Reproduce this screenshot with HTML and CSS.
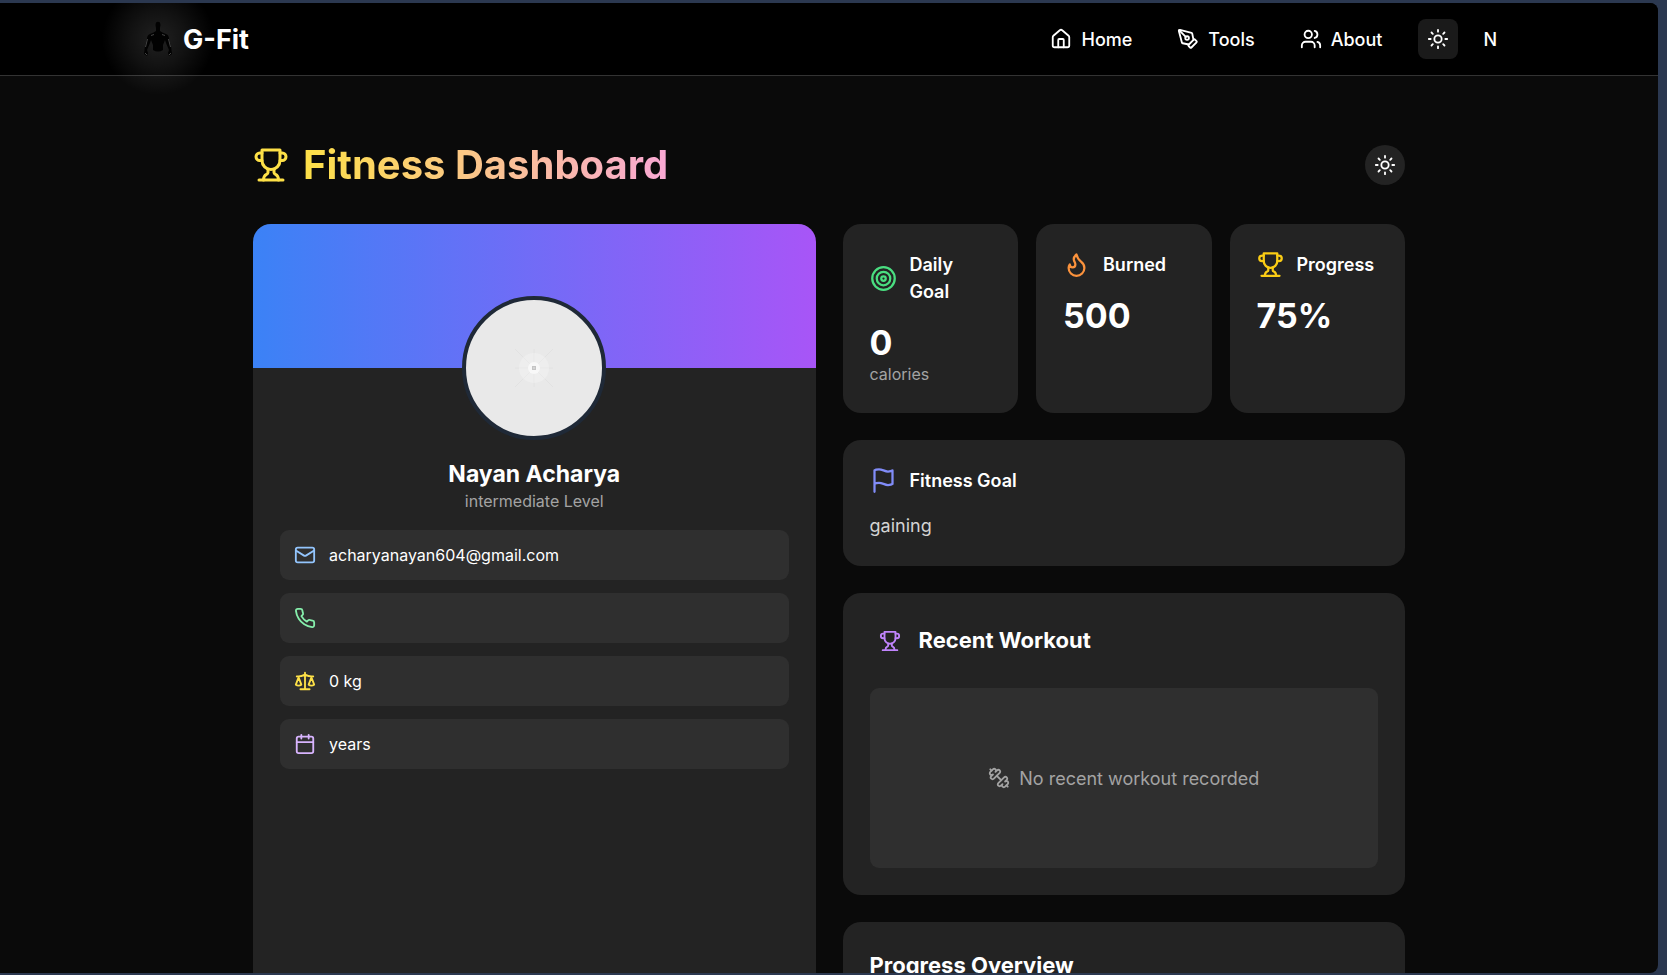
FILE: index.html
```
<!DOCTYPE html>
<html lang="en">

<head>
 <meta charset="UTF-8">
 <meta name="viewport" content="width=device-width, initial-scale=1.0">
 <title>G-Fit</title>
 <link rel="stylesheet" href="styles.css">
</head>

<body>
 <!-- shared icon shapes -->
 <svg class="sprite" aria-hidden="true">
  <symbol id="trophy" viewBox="0 0 24 24">
   <path d="M6 9H4.500a2.500 2.500 0 0 1 0-5H6" />
   <path d="M18 9h1.500a2.500 2.500 0 0 0 0-5H18" />
   <path d="M4 22h16" />
   <path d="M10 14.660V17c0 .55-.47.98-.97 1.210C7.850 18.750 7 20.240 7 22" />
   <path d="M14 14.660V17c0 .55.47.98.97 1.210C16.150 18.750 17 20.240 17 22" />
   <path d="M18 2H6v7a6 6 0 0 0 12 0V2Z" />
  </symbol>
  <symbol id="sun" viewBox="0 0 24 24">
   <circle cx="12" cy="12" r="4" />
   <path d="M12 2v2M12 20v2M4.930 4.930l1.410 1.410M17.660 17.660l1.410 1.410M2 12h2M20 12h2M6.340 17.660l-1.410 1.410M19.070 4.930l-1.410 1.410" />
  </symbol>
 </svg>

 <div class="window">
  <header class="navbar">
   <div class="navbar-inner">
    <a href="#" class="brand">
     <svg class="logo" viewBox="0 0 30 36" aria-hidden="true">
      <defs>
       <radialGradient id="glow">
        <stop offset="0" stop-color="#fff" stop-opacity=".13" />
        <stop offset=".5" stop-color="#fff" stop-opacity=".07" />
        <stop offset="1" stop-color="#fff" stop-opacity="0" />
       </radialGradient>
      </defs>
      <circle cx="15" cy="18" r="56" fill="url(#glow)" />
      <path class="logo-body" d="M13 1.500Q15 0 17 1.500Q18 4 17 7L17 10Q19 11.500 23 13Q26 14 26 18L28 25L29 33L26 35L25 32L26 29L23 22L22 19L20 24L20 29Q15 32 10 29L10 24L8 19L7 22L4 29L5 32L4 35L1 33L2 25L4 18Q4 14 7 13Q11 11.500 13 10L13 7Q12 4 13 1.500Z" />
      <path class="logo-edge" d="M4.500 18L2.500 26M25.500 18L27.500 26M2 32L4 34M28 32L26 34M8 14.500L11 13.500M22 14.500L19 13.500" />
     </svg>
     <span>G-Fit</span>
    </a>
    <nav class="nav-links">
     <a href="#" class="nav-link">
      <svg class="icon" viewBox="0 0 24 24" aria-hidden="true">
       <path d="M15 21v-8a1 1 0 0 0-1-1h-4a1 1 0 0 0-1 1v8" />
       <path d="M3 10a2 2 0 0 1 .709-1.528l7-5.999a2 2 0 0 1 2.582 0l7 5.999A2 2 0 0 1 21 10v9a2 2 0 0 1-2 2H5a2 2 0 0 1-2-2z" />
      </svg>
      Home
     </a>
     <a href="#" class="nav-link">
      <svg class="icon" viewBox="0 0 24 24" aria-hidden="true">
       <path d="M15.707 21.293a1 1 0 0 1-1.414 0l-1.586-1.586a1 1 0 0 1 0-1.414l5.586-5.586a1 1 0 0 1 1.414 0l1.586 1.586a1 1 0 0 1 0 1.414z" />
       <path d="m18 13-1.375-6.874a1 1 0 0 0-.746-.776L3.235 2.028a1 1 0 0 0-1.207 1.207L5.350 15.879a1 1 0 0 0 .776.746L13 18" />
       <path d="m2.300 2.300 7.286 7.286" />
       <circle cx="11" cy="11" r="2" />
      </svg>
      Tools
     </a>
     <a href="#" class="nav-link">
      <svg class="icon" viewBox="0 0 24 24" aria-hidden="true">
       <path d="M16 21v-2a4 4 0 0 0-4-4H6a4 4 0 0 0-4 4v2" />
       <circle cx="9" cy="7" r="4" />
       <path d="M22 21v-2a4 4 0 0 0-3-3.870M16 3.130a4 4 0 0 1 0 7.750" />
      </svg>
      About
     </a>
     <button class="theme-btn" aria-label="Toggle theme"><svg class="icon"><use href="#sun" /></svg></button>
     <button class="user-btn">N</button>
    </nav>
   </div>
  </header>

  <main class="dashboard">
   <div class="page-head">
    <h1 class="page-title">
     <svg class="icon icon-title"><use href="#trophy" /></svg>
     <span>Fitness Dashboard</span>
    </h1>
    <button class="round-btn" aria-label="Toggle theme"><svg class="icon"><use href="#sun" /></svg></button>
   </div>

   <div class="columns">
    <section class="card profile">
     <div class="banner"></div>
     <svg class="avatar" viewBox="0 0 136 136" role="img" aria-label="Profile picture">
      <path d="M68 49v38M49 68h38M49 49l38 38M87 49l-38 38" stroke="#e2e2e2" />
      <circle cx="68" cy="68" r="15" fill="#eeeeee" />
      <path d="M68 53v30M53 68h30M57 57l22 22M79 57l-22 22" stroke="#e9e9e9" />
      <circle cx="68" cy="68" r="6" fill="#f8f8f8" />
      <path d="M66 66h4v4h-4z" fill="#c4c4c4" />
      <path d="M67 68h2" stroke="#e4e4e4" />
     </svg>
     <div class="profile-body">
      <h2 class="name">Nayan Acharya</h2>
      <p class="level">intermediate Level</p>
      <ul class="info">
       <li>
        <svg class="icon blue" viewBox="0 0 24 24" aria-hidden="true">
         <rect width="20" height="16" x="2" y="4" rx="2" />
         <path d="m22 7-8.970 5.700a1.940 1.940 0 0 1-2.060 0L2 7" />
        </svg>
        <span>acharyanayan604@gmail.com</span>
       </li>
       <li>
        <svg class="icon mint" viewBox="0 0 24 24" aria-hidden="true">
         <path d="M22 16.920v3a2 2 0 0 1-2.180 2 19.790 19.790 0 0 1-8.630-3.070 19.500 19.500 0 0 1-6-6 19.790 19.790 0 0 1-3.070-8.670A2 2 0 0 1 4.110 2h3a2 2 0 0 1 2 1.720 12.840 12.840 0 0 0 .7 2.810 2 2 0 0 1-.45 2.110L8.090 9.910a16 16 0 0 0 6 6l1.270-1.270a2 2 0 0 1 2.110-.45 12.840 12.840 0 0 0 2.810.7A2 2 0 0 1 22 16.920z" />
        </svg>
        <span></span>
       </li>
       <li>
        <svg class="icon yellow" viewBox="0 0 24 24" aria-hidden="true">
         <path d="m16 16 3-8 3 8c-.87.65-1.920 1-3 1s-2.130-.35-3-1Z" />
         <path d="m2 16 3-8 3 8c-.87.65-1.920 1-3 1s-2.130-.35-3-1Z" />
         <path d="M7 21h10M12 3v18M3 7h2c2 0 5-1 7-2 2 1 5 2 7 2h2" />
        </svg>
        <span>0 kg</span>
       </li>
       <li>
        <svg class="icon lilac" viewBox="0 0 24 24" aria-hidden="true">
         <path d="M8 2v4M16 2v4M3 10h18" />
         <rect width="18" height="18" x="3" y="4" rx="2" />
        </svg>
        <span>years</span>
       </li>
      </ul>
     </div>
    </section>

    <div class="side">
     <div class="stats">
      <section class="card stat">
       <h3 class="label">
        <svg class="icon icon-lg green" viewBox="0 0 24 24" aria-hidden="true">
         <circle cx="12" cy="12" r="10" />
         <circle cx="12" cy="12" r="6" />
         <circle cx="12" cy="12" r="2" />
        </svg>
        <span>Daily Goal</span>
       </h3>
       <p class="value">0</p>
       <p class="unit">calories</p>
      </section>
      <section class="card stat">
       <h3 class="label">
        <svg class="icon icon-lg orange" viewBox="0 0 24 24" aria-hidden="true">
         <path d="M8.500 14.500A2.500 2.500 0 0 0 11 12c0-1.380-.5-2-1-3-1.072-2.143-.224-4.054 2-6 .5 2.500 2 4.900 4 6.500 2 1.600 3 3.500 3 5.500a7 7 0 1 1-14 0c0-1.153.433-2.294 1-3a2.500 2.500 0 0 0 2.500 2.500z" />
        </svg>
        <span>Burned</span>
       </h3>
       <p class="value">500</p>
      </section>
      <section class="card stat">
       <h3 class="label">
        <svg class="icon icon-lg gold"><use href="#trophy" /></svg>
        <span>Progress</span>
       </h3>
       <p class="value">75%</p>
      </section>
     </div>

     <section class="card goal">
      <h3 class="label">
       <svg class="icon icon-lg indigo" viewBox="0 0 24 24" aria-hidden="true">
        <path d="M4 15s1-1 4-1 5 2 8 2 4-1 4-1V3s-1 1-4 1-5-2-8-2-4 1-4 1zM4 22v-7" />
       </svg>
       <span>Fitness Goal</span>
      </h3>
      <p class="goal-text">gaining</p>
     </section>

     <section class="card workout">
      <h2 class="section-title">
       <svg class="icon purple"><use href="#trophy" /></svg>
       <span>Recent Workout</span>
      </h2>
      <div class="empty">
       <svg class="icon" viewBox="0 0 24 24" aria-hidden="true">
        <path d="M14.400 14.400 9.600 9.600" />
        <path d="M18.657 21.485a2 2 0 1 1-2.829-2.828l-1.767 1.768a2 2 0 1 1-2.829-2.829l6.364-6.364a2 2 0 1 1 2.829 2.829l-1.768 1.767a2 2 0 1 1 2.828 2.829z" />
        <path d="m21.500 21.500-1.400-1.400M3.900 3.900 2.500 2.500" />
        <path d="M6.404 12.768a2 2 0 1 1-2.829-2.829l1.768-1.767a2 2 0 1 1-2.828-2.829l2.828-2.828a2 2 0 1 1 2.829 2.828l1.767-1.768a2 2 0 1 1 2.829 2.829z" />
       </svg>
       <span>No recent workout recorded</span>
      </div>
     </section>

     <section class="card overview">
      <h2>Progress Overview</h2>
     </section>
    </div>
   </div>
  </main>
 </div>
</body>

</html>
```

FILE: styles.css
```
* {
 box-sizing: border-box;
}

body {
 margin: 0;
 height: 100vh;
 padding: 3px 9px 2px 0;
 overflow: hidden;
 background-color: #2b3850;
 color: #fff;
 font-family: Inter, "Liberation Sans", sans-serif;
 font-size: 18px;
 line-height: 27px;
}

h1, h2, h3, p, ul {
 margin: 0;
 padding: 0;
}

button {
 border: 0;
 padding: 0;
 color: inherit;
 font: inherit;
 cursor: pointer;
}

a {
 color: inherit;
 text-decoration: none;
}

.sprite {
 display: none;
}

.window {
 height: 100%;
 overflow: hidden;
 background-color: #0a0a0a;
 border-radius: 0 8px 8px 0;
}

.icon {
 flex: none;
 width: 22px;
 height: 22px;
 fill: none;
 stroke: currentColor;
 stroke-width: 2;
 stroke-linecap: round;
 stroke-linejoin: round;
}

.icon-lg {
 width: 27px;
 height: 27px;
}

.blue { color: #93c5fd; }
.mint { color: #86efac; }
.yellow { color: #fde047; }
.lilac { color: #d8b4fe; }
.green { color: #4ade80; }
.orange { color: #fb923c; }
.gold { color: #facc15; }
.indigo { color: #818cf8; }
.purple { color: #c084fc; }

/* navbar */
.navbar {
 background-color: #000;
 border-bottom: 1px solid #333;
}

.navbar-inner {
 display: flex;
 align-items: center;
 justify-content: space-between;
 max-width: 1372px;
 height: 72px;
 margin: 0 auto;
}

.brand {
 display: flex;
 align-items: center;
 gap: 10px;
 font-size: 27px;
 font-weight: 700;
}

/* the glow spills out of the icon box */
.logo {
 width: 30px;
 height: 36px;
 overflow: visible;
}

.logo-body {
 fill: #020202;
}

.logo-edge {
 fill: none;
 stroke: #444;
}

.nav-links {
 display: flex;
 align-items: center;
 font-weight: 500;
}

.nav-link {
 display: flex;
 align-items: center;
 gap: 9px;
 margin-right: 45px;
}

.theme-btn {
 display: grid;
 place-items: center;
 width: 40px;
 height: 40px;
 margin-left: -9px;
 border-radius: 8px;
 background-color: #1a1a1a;
}

.user-btn {
 padding: 0 18px 0 25px;
 height: 40px;
 background: none;
}

/* dashboard */
.dashboard {
 max-width: 1152px;
 margin: 0 auto;
 padding-top: 64px;
}

.page-head {
 display: flex;
 align-items: center;
 justify-content: space-between;
 margin-bottom: 34px;
}

.page-title {
 display: flex;
 align-items: center;
 gap: 14px;
 font-size: 40px;
 line-height: 50px;
 font-weight: 700;
}

.page-title span {
 background-image: linear-gradient(to right, #fde047, #f9a8d4);
 -webkit-background-clip: text;
 background-clip: text;
 color: transparent;
}

.icon-title {
 width: 36px;
 height: 36px;
 color: #fde047;
}

.round-btn {
 display: grid;
 place-items: center;
 width: 40px;
 height: 40px;
 border-radius: 50%;
 background-color: #232323;
}

.columns {
 display: grid;
 grid-template-columns: 1fr 1fr;
 gap: 27px;
}

.card {
 min-width: 0;
 border-radius: 18px;
 background-color: #232323;
}

.profile {
 overflow: hidden;
}

.banner {
 height: 144px;
 background-image: linear-gradient(to right, #3b82f6, #a855f7);
}

.avatar {
 display: block;
 position: relative;
 width: 144px;
 height: 144px;
 margin: -72px auto 0;
 border: 4px solid #1f2937;
 border-radius: 50%;
 background-color: #e9e9e9;
}

.profile-body {
 padding: 18px 27px 27px;
 text-align: center;
}

.name {
 font-size: 23px;
 line-height: 32px;
}

.level {
 color: #a3a3a3;
 font-size: 16px;
 line-height: 22px;
}

.info {
 display: grid;
 gap: 13px;
 margin-top: 18px;
 list-style: none;
}

.info li {
 display: flex;
 align-items: center;
 gap: 13px;
 height: 50px;
 padding: 0 14px;
 border-radius: 9px;
 background-color: #2f2f2f;
 font-size: 16px;
}

.side {
 display: grid;
 gap: 27px;
}

.stats {
 display: grid;
 grid-template-columns: repeat(3, 1fr);
 gap: 18px;
}

.stat, .goal, .workout, .overview {
 padding: 27px;
}

.label {
 display: flex;
 align-items: center;
 gap: 13px;
 font-size: 18px;
 font-weight: 600;
}

.value {
 margin-top: 18px;
 font-size: 34px;
 line-height: 40px;
 font-weight: 700;
}

.unit {
 color: #a3a3a3;
 font-size: 16px;
 line-height: 23px;
}

.goal-text {
 margin-top: 18px;
 color: #d4d4d4;
}

.section-title {
 display: flex;
 align-items: center;
 gap: 18px;
 padding: 4px 9px;
 font-size: 22px;
 line-height: 33px;
 font-weight: 700;
}

.empty {
 display: flex;
 align-items: center;
 justify-content: center;
 gap: 9px;
 height: 180px;
 margin-top: 27px;
 border-radius: 9px;
 background-color: #2f2f2f;
 color: #a3a3a3;
}

.overview {
 height: 400px;
}

.overview h2 {
 font-size: 22px;
 line-height: 33px;
 font-weight: 700;
}
```
